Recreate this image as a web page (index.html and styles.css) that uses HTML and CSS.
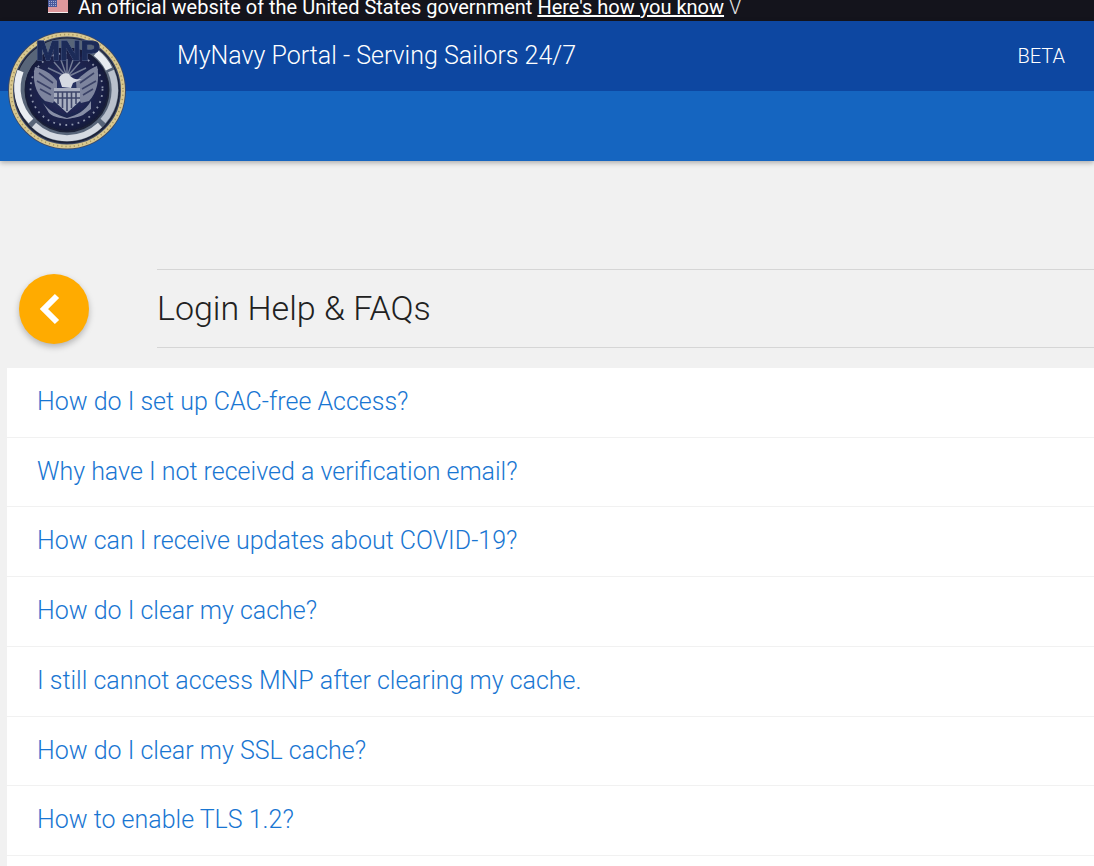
FILE: index.html
```html
<!DOCTYPE html>
<html lang="en">
<head>
<meta charset="utf-8">
<title>Login Help &amp; FAQs</title>
<link rel="stylesheet" href="styles.css">
</head>
<body>
<div class="gov-banner">
  <svg class="flag" viewBox="0 0 20 13" width="20" height="13" aria-hidden="true">
    <rect width="20" height="13" fill="#f4eeee"/>
    <path d="M0 1h20M0 3h20M0 5h20M0 7h20M0 9h20M0 11h20" stroke="#c8434a" stroke-width="1"/>
    <rect width="9" height="7" fill="#4a5a9c"/>
    <path d="M1 1.5h7M1 3.5h7M1 5.5h7" stroke="#cfd3ea" stroke-width=".7" stroke-dasharray="1 1"/>
  </svg>
  <span>An official website of the United States government</span>
  <a href="#" class="gov-link">Here's how you know</a>
  <span class="gov-caret">V</span>
</div>
<header class="site-header">
  <div class="header-top">
    <div class="site-title">MyNavy Portal - Serving Sailors 24/7</div>
    <div class="beta">BETA</div>
  </div>
  <div class="header-bottom"></div>
  <svg class="logo" viewBox="0 0 120 120" width="120" height="120" aria-label="MNP logo">
    <defs>
      <radialGradient id="core" cx=".5" cy=".5" r=".55">
        <stop offset="0" stop-color="#2b3568"/>
        <stop offset=".75" stop-color="#1b2149"/>
        <stop offset="1" stop-color="#0f1430"/>
      </radialGradient>
      <filter id="soft" x="-5%" y="-5%" width="110%" height="110%"><feGaussianBlur stdDeviation=".6"/></filter>
    </defs>
    <g filter="url(#soft)">
      <circle cx="60" cy="59.5" r="59" fill="#3f4a66"/>
      <circle cx="60" cy="59.5" r="56" fill="none" stroke="#d9c88f" stroke-width="4"/>
      <circle cx="60" cy="59.5" r="56" fill="none" stroke="#a8975f" stroke-width="1.6" stroke-dasharray="1.2 3"/>
      <circle cx="60" cy="59.5" r="53" fill="#1c2238"/>
      <circle cx="60" cy="59" r="47" fill="none" stroke="#596579" stroke-width="9"/>
      <path d="M13.500 40 A47 47 0 0 0 24 90" fill="none" stroke="#e9edf2" stroke-width="6.5"/>
      <path d="M104 40 A47 47 0 0 1 96 90" fill="none" stroke="#b9c0cc" stroke-width="6.5"/>
      <path d="M27 94 A48 48 0 0 0 93 94" fill="none" stroke="#d5dae2" stroke-width="6"/>
      <path d="M89 22 A47 47 0 0 1 102 38" fill="none" stroke="#e8ecf1" stroke-width="7"/>
      <circle cx="59.5" cy="58" r="41.5" fill="url(#core)"/>
      <circle cx="59.5" cy="58" r="36" fill="none" stroke="#8f96ad" stroke-width="1.8" stroke-dasharray="1.8 4.4"/>
      <path d="M60 46 L47 31M60 46 L54 29M60 46 L60 28M60 46 L66 29M60 46 L73 31M60 46 L41 37M60 46 L79 37" stroke="#757d96" stroke-width="1.4"/>
      <path d="M50 50 C44 42 36 38 28 36 C25 48 28 62 38 70 L46 72 L50 64Z M69 50 C75 44 82 38 90 35 C93 48 90 62 82 70 L74 72 L70 64Z" fill="#7d849e"/>
      <path d="M32 42 L46 52M30 50 L44 58M33 58 L44 64M87 42 L73 52M89 50 L75 58M86 58 L76 64" stroke="#3b4368" stroke-width="1.6"/>
      <path d="M52 47 a7 6 0 0 1 10 -4 C64 47 68 49 75 48 L66 52 L64 57 L55 56Z" fill="#d6dae3"/>
      <path d="M47 57 H73 V70 L60 82 L47 70Z" fill="#a9afc1"/>
      <path d="M51 61V73M55.500 61V77M60 61V80M64.500 61V77M69 61V73" stroke="#3f476b" stroke-width="1.6"/>
      <path d="M47 61H73M47 67H73" stroke="#3f476b" stroke-width="1.3"/>
      <path d="M36 72 C42 80 50 84 60 87 C70 84 78 80 84 70 L84 78 L76 84 C70 87 64 87 60 88 C54 87 48 87 42 82Z" fill="#878ea6"/>
    </g>
    <text x="29" y="29" textLength="64" lengthAdjust="spacingAndGlyphs" class="logo-text">MNP</text>
  </svg>
</header>
<main class="page">
  <div class="title-row">
    <button class="back-btn" type="button" aria-label="Back">
      <svg viewBox="0 0 24 34" width="24" height="34" aria-hidden="true"><path d="M19 4 L6 17 L19 30" fill="none" stroke="#fff" stroke-width="6"/></svg>
    </button>
    <h1 class="page-title">Login Help &amp; FAQs</h1>
  </div>
  <ul class="faq-list">
    <li class="faq-item"><a href="#">How do I set up CAC-free Access?</a></li>
    <li class="faq-item"><a href="#">Why have I not received a verification email?</a></li>
    <li class="faq-item"><a href="#">How can I receive updates about COVID-19?</a></li>
    <li class="faq-item"><a href="#">How do I clear my cache?</a></li>
    <li class="faq-item"><a href="#">I still cannot access MNP after clearing my cache.</a></li>
    <li class="faq-item"><a href="#">How do I clear my SSL cache?</a></li>
    <li class="faq-item"><a href="#">How to enable TLS 1.2?</a></li>
    <li class="faq-item"></li>
  </ul>
</main>
</body>
</html>
```
FILE: styles.css
```css
* { box-sizing: border-box; }
html, body { height: 100%; }
body {
  margin: 0;
  height: 866px;
  overflow: hidden;
  background: #f1f1f1;
  font-family: Roboto, "Liberation Sans", sans-serif;
}
.gov-banner {
  height: 21px;
  background: #14141c;
  color: #fff;
  display: flex;
  align-items: flex-end;
  gap: 5px;
  padding: 0 0 3px 48px;
  font-size: 20px;
  line-height: 21px;
  white-space: nowrap;
  overflow: hidden;
}
.flag { flex: none; margin: 0 5px 5px 0; }
.gov-link { color: #fff; text-decoration: underline; }
.gov-caret { color: #e6e6e6; font-weight: 300; }
.site-header {
  position: relative;
  box-shadow: 0 2px 5px rgba(0, 0, 0, .28);
}
.header-top {
  height: 70px;
  background: #0d47a1;
  color: #fff;
  display: flex;
  justify-content: space-between;
  padding: 18px 29px 0 177px;
  font-weight: 300;
}
.site-title { font-size: 25px; line-height: 34px; }
.beta { font-size: 20px; line-height: 35px; font-weight: 300; }
.header-bottom { height: 70px; background: #1565c0; }
.logo { position: absolute; left: 6.5px; top: 10px; }
.logo-text {
  font-family: "Liberation Sans", sans-serif;
  font-weight: 700;
  font-size: 28px;
  fill: #1c2b58;
  stroke: #1c2b58;
  stroke-width: 1.2;
  filter: drop-shadow(0 0 .7px #8c9cc2);
}
.page { padding: 108px 0 0 7px; }
.title-row {
  display: flex;
  align-items: center;
  height: 79px;
  margin-bottom: 20px;
}
.back-btn {
  flex: none;
  width: 70px;
  height: 70px;
  margin-left: 12px;
  border: 0;
  border-radius: 50%;
  background: #ffab00;
  box-shadow: 0 3px 6px rgba(0, 0, 0, .25);
  display: flex;
  align-items: center;
  justify-content: center;
  padding: 0 8px 0 0;
}
.page-title {
  flex: 1;
  margin: 0 0 0 68px;
  height: 79px;
  border-top: 1px solid #d6d6d6;
  border-bottom: 1px solid #d6d6d6;
  font-size: 34px;
  font-weight: 300;
  line-height: 77px;
  color: #212121;
}
.faq-list { list-style: none; margin: 0; padding: 0; }
.faq-item {
  height: 69.72px;
  background: #fff;
  border-bottom: 1px solid #f1f1f1;
  padding-left: 30px;
  font-size: 25px;
  font-weight: 300;
  line-height: 67px;
}
.faq-item a { color: #1976d2; text-decoration: none; }
```
